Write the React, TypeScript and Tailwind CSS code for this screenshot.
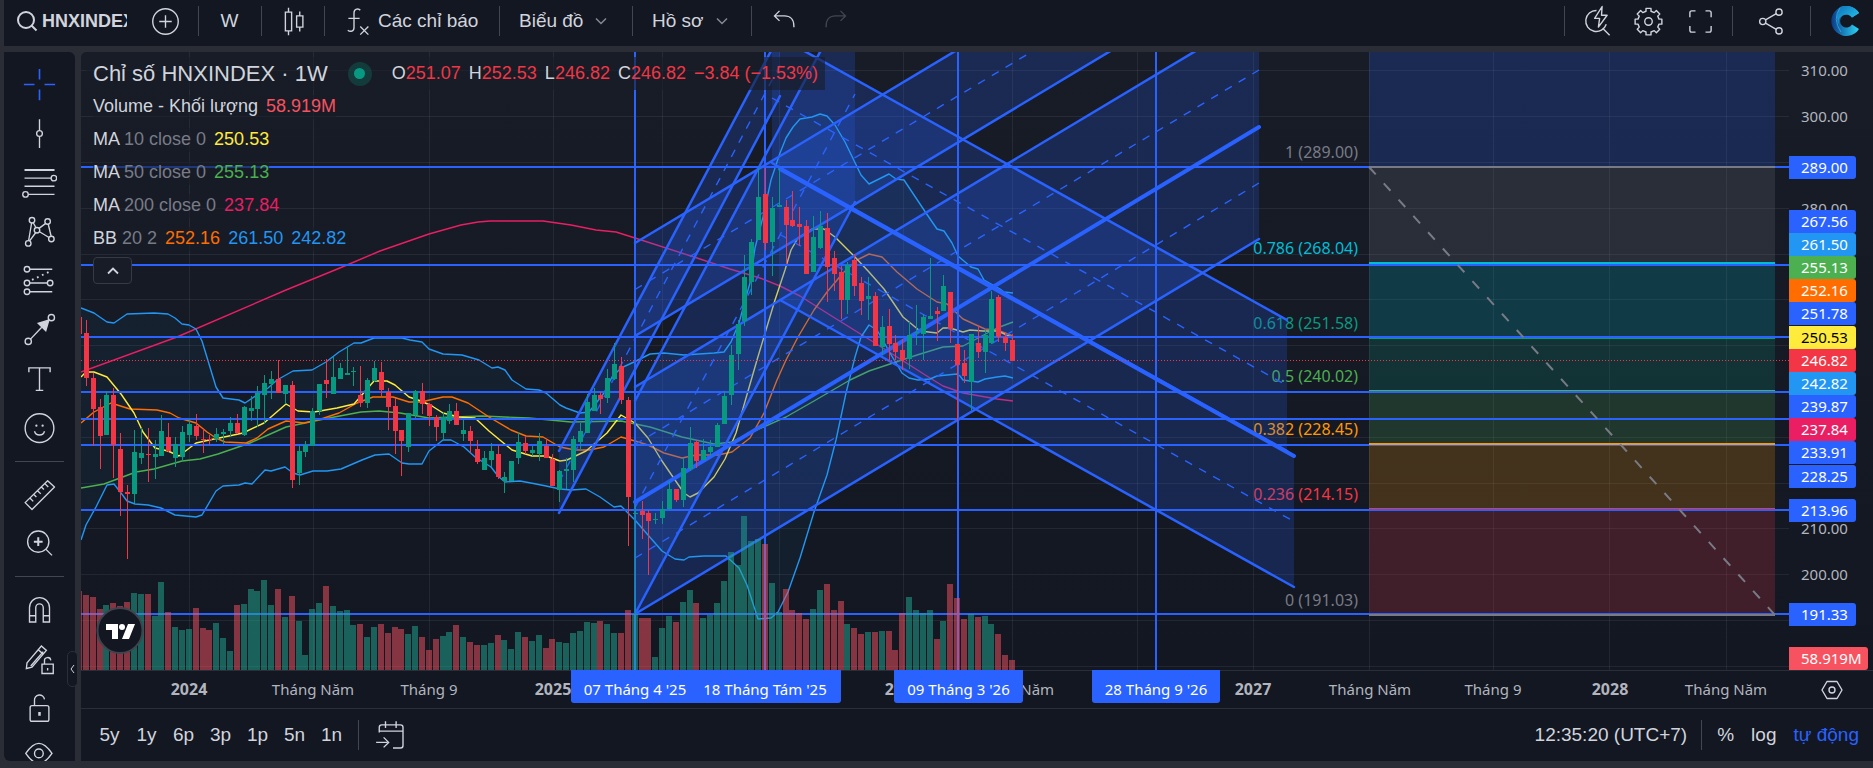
import type { ReactNode } from "react";

const BLUE = "#2962ff";
const UP = "#089981";
const DOWN = "#f23645";

// direction, body top, body bottom, wick top, wick bottom, volume height
type Bar = ["u" | "d", number, number, number, number, number];

const bars: Bar[] = [
  ["d", 333, 378, 320, 386, 75], ["d", 378, 409, 373, 446, 73], ["d", 407, 436, 399, 469, 61], ["u", 395, 435, 391, 435, 65],
  ["d", 395, 445, 388, 478, 67], ["d", 449, 492, 433, 516, 64], ["d", 492, 494, 485, 559, 68], ["u", 452, 494, 430, 503, 77],
  ["u", 453, 458, 428, 464, 76], ["d", 454, 455, 428, 482, 76], ["u", 454, 457, 440, 479, 54], ["u", 431, 456, 415, 456, 88],
  ["d", 437, 451, 423, 452, 58], ["u", 444, 458, 437, 467, 43], ["u", 432, 457, 426, 461, 40], ["u", 424, 435, 419, 442, 41],
  ["d", 426, 436, 414, 440, 62], ["d", 439, 440, 428, 453, 42], ["d", 439, 440, 435, 445, 40], ["u", 434, 439, 428, 442, 47],
  ["u", 432, 434, 429, 444, 32], ["u", 423, 431, 417, 437, 19], ["d", 423, 433, 414, 434, 65], ["u", 407, 435, 406, 436, 66],
  ["u", 408, 411, 396, 421, 81], ["u", 393, 409, 386, 427, 79], ["u", 383, 395, 375, 424, 90], ["u", 379, 384, 371, 399, 65],
  ["d", 379, 393, 360, 393, 81], ["u", 385, 394, 385, 404, 53], ["d", 385, 480, 381, 488, 74], ["u", 451, 473, 446, 485, 49],
  ["u", 445, 452, 441, 457, 15], ["u", 411, 446, 408, 446, 61], ["u", 384, 411, 384, 415, 67], ["d", 380, 384, 359, 398, 84],
  ["u", 377, 394, 357, 394, 64], ["u", 368, 379, 363, 379, 59], ["u", 373, 375, 347, 375, 60], ["u", 371, 372, 367, 386, 45],
  ["d", 395, 403, 366, 407, 46], ["u", 380, 403, 378, 408, 33], ["u", 368, 381, 361, 382, 43], ["d", 372, 390, 362, 396, 46],
  ["d", 392, 407, 388, 430, 37], ["d", 406, 431, 398, 454, 43], ["d", 430, 441, 430, 476, 41], ["u", 413, 447, 413, 452, 36],
  ["u", 391, 415, 390, 418, 44], ["d", 391, 404, 383, 414, 33], ["d", 404, 416, 403, 426, 20], ["d", 417, 427, 415, 441, 31],
  ["u", 417, 433, 412, 440, 34], ["u", 411, 421, 404, 424, 38], ["d", 411, 425, 403, 425, 45], ["u", 430, 434, 420, 441, 33],
  ["d", 431, 441, 426, 453, 28], ["d", 449, 462, 440, 464, 25], ["u", 458, 470, 451, 470, 25], ["u", 451, 460, 443, 467, 27],
  ["d", 454, 477, 445, 479, 35], ["u", 477, 481, 472, 493, 30], ["u", 461, 481, 461, 481, 21], ["u", 442, 458, 432, 464, 38],
  ["d", 443, 451, 436, 454, 33], ["u", 450, 453, 446, 456, 29], ["u", 441, 454, 433, 461, 35], ["d", 446, 458, 439, 458, 22],
  ["d", 459, 486, 454, 486, 31], ["u", 471, 490, 470, 502, 28], ["u", 469, 471, 458, 489, 27], ["u", 439, 470, 436, 482, 37],
  ["u", 431, 442, 423, 450, 39], ["u", 402, 433, 394, 433, 48], ["u", 395, 411, 388, 411, 47], ["d", 395, 399, 392, 414, 49],
  ["u", 378, 398, 369, 403, 46], ["u", 364, 379, 343, 380, 37], ["d", 366, 400, 357, 404, 37], ["d", 400, 497, 397, 546, 60],
  ["u", 513, 514, 505, 614, 56], ["d", 511, 515, 501, 539, 52], ["d", 513, 521, 510, 575, 52], ["u", 519, 520, 513, 524, 13],
  ["u", 509, 518, 501, 524, 42], ["u", 489, 509, 481, 510, 54], ["d", 489, 500, 489, 502, 48], ["u", 468, 500, 458, 507, 68],
  ["u", 443, 469, 427, 471, 80], ["d", 442, 461, 440, 468, 67], ["u", 450, 460, 439, 460, 52], ["u", 447, 452, 440, 456, 55],
  ["u", 425, 447, 423, 447, 67], ["u", 396, 424, 391, 424, 89], ["u", 355, 395, 345, 405, 118], ["u", 324, 354, 320, 370, 105],
  ["u", 277, 321, 255, 326, 154], ["u", 242, 282, 239, 295, 129], ["u", 197, 240, 167, 240, 131], ["d", 194, 243, 168, 250, 126],
  ["u", 208, 242, 197, 276, 87], ["u", 205, 207, 168, 207, 58], ["d", 207, 225, 200, 264, 81], ["d", 220, 226, 191, 227, 60],
  ["d", 224, 227, 207, 246, 57], ["d", 226, 274, 220, 274, 51], ["u", 237, 272, 216, 272, 61], ["u", 226, 248, 211, 249, 80],
  ["d", 228, 267, 213, 302, 86], ["d", 258, 274, 251, 291, 60], ["d", 272, 300, 266, 319, 69], ["u", 265, 300, 262, 314, 46],
  ["d", 260, 286, 254, 296, 42], ["d", 283, 301, 277, 315, 36], ["u", 296, 299, 277, 320, 38], ["d", 296, 346, 292, 346, 38],
  ["u", 327, 347, 316, 355, 39], ["d", 326, 344, 309, 360, 39], ["d", 343, 352, 335, 360, 20], ["d", 350, 360, 339, 370, 57],
  ["u", 335, 359, 322, 369, 73], ["u", 332, 333, 305, 345, 60], ["u", 317, 334, 314, 360, 57], ["u", 316, 319, 258, 319, 60],
  ["d", 311, 314, 307, 341, 31], ["u", 286, 311, 275, 311, 49], ["d", 292, 329, 292, 343, 86], ["d", 344, 365, 344, 421, 72],
  ["d", 363, 376, 350, 383, 51], ["u", 334, 382, 334, 410, 56], ["d", 343, 352, 325, 358, 53], ["u", 335, 352, 330, 373, 54],
  ["u", 299, 343, 291, 344, 46], ["d", 297, 337, 295, 342, 36], ["d", 337, 343, 332, 351, 15], ["d", 340, 361, 334, 361, 10],
];

const barX = (i: number) => Math.floor(86.4 + 6.86 * i);

const ma200 =
  "81,372 177,337 286,290 335,270 347,265 380,251 429,234 461,225 478,222 490,221 543,221 571,225 596,230 616,232 635,238 694,257 730,269 760,278 780,286 800,296 830,315 867,338 897,357 930,378 943,386 963,393 997,399 1013,401";
const ma50 =
  "81,488 104,484 136,472 154,469 182,461 200,459 218,454 250,443 268,435 286,427 329,418 361,412 379,411 400,413 429,418 482,416 529,418 571,422 621,421 650,427 682,437 714,444 732,442 750,433 786,417 814,401 850,380 869,371 890,364 917,355 943,347 963,346 980,337 997,328 1013,322";
const ma10 =
  "81,377 86,372 94,372 107,377 121,394 134,413 143,432 155,448 168,451 179,456 196,443 214,439 229,436 243,433 264,423 286,404 298,411 314,412 337,408 354,404 374,381 387,381 395,385 409,397 421,401 432,406 443,413 459,417 475,418 489,431 512,450 532,456 546,456 560,461 567,460 586,451 607,433 621,415 635,423 648,438 662,461 675,480 684,493 690,497 698,493 714,477 725,459 736,433 746,398 757,360 766,330 775,300 785,270 791,250 798,238 812,229 824,229 835,237 855,257 869,272 884,289 903,317 920,331 937,333 943,328 950,328 963,332 970,330 983,331 998,331 1013,338";
const bbMid =
  "81,423 94,412 111,403 130,409 157,410 170,413 179,418 196,423 207,432 216,438 225,442 246,443 257,438 268,429 286,421 304,423 321,419 339,413 357,403 373,397 393,397 409,402 421,402 443,397 452,397 468,403 489,417 511,430 526,436 543,437 560,447 575,450 589,450 604,447 621,437 635,441 648,445 664,453 682,458 696,455 718,455 732,452 750,438 764,413 777,380 786,360 798,337 814,310 827,292 843,273 857,260 869,254 882,257 897,272 917,289 937,302 947,304 963,319 985,329 997,330 1013,336";
const bbUpper =
  "81,308 94,313 107,322 114,323 127,314 154,313 168,314 175,318 182,324 189,325 196,329 202,341 216,387 223,398 239,400 245,403 257,395 268,388 277,380 293,371 312,370 326,362 339,352 354,343 361,343 374,338 402,338 410,340 422,342 429,349 443,354 462,355 479,360 492,368 498,367 505,370 512,380 526,389 539,390 546,393 560,405 566,408 580,413 589,412 604,393 612,377 621,368 634,362 650,354 664,353 684,355 714,353 724,352 731,342 739,323 746,297 750,283 755,248 763,217 771,180 780,153 786,138 793,127 800,119 812,117 820,114 827,116 835,125 845,142 861,175 869,184 889,174 896,179 904,180 916,198 926,213 937,229 944,231 952,243 958,256 971,267 978,269 984,280 1000,289 1004,292 1013,293";
const bbLower =
  "81,540 86,525 96,507 107,485 114,484 121,493 127,501 135,504 148,505 161,508 175,515 196,517 202,515 216,491 223,486 239,485 245,483 252,484 265,470 271,471 285,467 293,473 300,475 313,471 327,471 341,469 362,460 375,455 389,454 402,463 409,464 422,464 429,451 443,440 451,440 464,447 475,457 491,467 498,476 505,482 520,481 536,484 546,486 560,489 571,490 586,489 600,497 614,507 621,506 635,520 648,535 662,551 675,559 684,560 689,557 704,556 726,556 739,568 747,585 758,619 771,618 778,612 788,592 800,558 814,512 827,475 836,440 846,393 855,357 861,337 869,325 877,330 890,353 902,373 909,378 918,380 930,379 937,376 957,374 960,376 963,380 978,382 985,379 997,377 1005,376 1013,378";

const bbArea = bbUpper + " " + bbLower.split(" ").reverse().join(" ");

// parallel channels: x range, top edge start/end, bottom edge start/end, edge widths
const channels = [
  { x1: 559, x2: 780, a1: 451, a2: 34, b1: 513, b2: 96, wa: 2.5, wb: 2.5 },
  { x1: 635, x2: 855, a1: 401, a2: -14, b1: 614, b2: 202, wa: 2.5, wb: 2.5 },
  { x1: 635, x2: 1259, a1: 243, a2: -131, b1: 336, b2: -38, wa: 2.5, wb: 2.5 },
  { x1: 635, x2: 1259, a1: 387, a2: 13, b1: 502, b2: 127, wa: 2.5, wb: 4 },
  { x1: 635, x2: 1259, a1: 502, a2: 127, b1: 614, b2: 239, wa: 2.5, wb: 2.5 },
  { x1: 772, x2: 1287, a1: 33, a2: 320, b1: 163, b2: 451, wa: 2.5, wb: 2.5 },
  { x1: 780, x2: 1294, a1: 169, a2: 456, b1: 300, b2: 587, wa: 4, wb: 2.5 },
];

const hLines = [167, 265, 337, 392, 419, 445, 510, 614];
const vLines = [635, 765, 958, 1156];

const fibs = [
  { top: 52, h: 115, fill: "#2962ff" },
  { top: 167, h: 96, fill: "#787b86" },
  { top: 263, h: 75, fill: "#00bcd4" },
  { top: 338, h: 53, fill: "#089981" },
  { top: 391, h: 53, fill: "#4caf50" },
  { top: 444, h: 65, fill: "#ff9800" },
  { top: 509, h: 106, fill: "#f23645" },
];

const fibLevels = [
  { y: 167, label: "1 (289.00)", color: "#787b86" },
  { y: 263, label: "0.786 (268.04)", color: "#00bcd4" },
  { y: 338, label: "0.618 (251.58)", color: "#089981" },
  { y: 391, label: "0.5 (240.02)", color: "#4caf50" },
  { y: 444, label: "0.382 (228.45)", color: "#ff9800" },
  { y: 509, label: "0.236 (214.15)", color: "#f23645" },
  { y: 615, label: "0 (191.03)", color: "#787b86" },
];

const gridY = [70, 116, 162, 208, 254, 299, 345, 391, 437, 483, 528, 574, 620, 666];
const gridX = [189, 313, 429, 553, 662, 779, 903, 1012, 1137, 1253, 1369, 1493, 1609, 1726];

const priceLabels = [
  { y: 70, text: "310.00" },
  { y: 116, text: "300.00" },
  { y: 208, text: "280.00" },
  { y: 528, text: "210.00" },
  { y: 574, text: "200.00" },
];

const priceTags = [
  { y: 156, text: "289.00", bg: BLUE },
  { y: 210, text: "267.56", bg: BLUE },
  { y: 233, text: "261.50", bg: "#2196f3" },
  { y: 256, text: "255.13", bg: "#4caf50" },
  { y: 279, text: "252.16", bg: "#ff6d00" },
  { y: 302, text: "251.78", bg: BLUE },
  { y: 326, text: "250.53", bg: "#ffeb3b", fg: "#000" },
  { y: 349, text: "246.82", bg: DOWN },
  { y: 372, text: "242.82", bg: "#2196f3" },
  { y: 395, text: "239.87", bg: BLUE },
  { y: 418, text: "237.84", bg: "#e91e63" },
  { y: 441, text: "233.91", bg: BLUE },
  { y: 465, text: "228.25", bg: BLUE },
  { y: 499, text: "213.96", bg: BLUE },
  { y: 603, text: "191.33", bg: BLUE },
  { y: 647, text: "58.919M", bg: "#f7525f", w: 79 },
];

const timeLabels = [
  { x: 189, text: "2024", bold: true },
  { x: 313, text: "Tháng Năm" },
  { x: 429, text: "Tháng 9" },
  { x: 553, text: "2025", bold: true },
  { x: 903, text: "2026", bold: true },
  { x: 1013, text: "Tháng Năm" },
  { x: 1253, text: "2027", bold: true },
  { x: 1370, text: "Tháng Năm" },
  { x: 1493, text: "Tháng 9" },
  { x: 1610, text: "2028", bold: true },
  { x: 1726, text: "Tháng Năm" },
];

const timeTags = [
  { x: 571, w: 128, text: "07 Tháng 4 '25" },
  { x: 689, w: 152, text: "18 Tháng Tám '25" },
  { x: 894, w: 129, text: "09 Tháng 3 '26" },
  { x: 1092, w: 128, text: "28 Tháng 9 '26" },
];

function Chart() {
  return (
    <svg
      viewBox="81 52 1792 656"
      preserveAspectRatio="xMinYMin meet"
      className="block h-full w-full font-['Noto_Sans',sans-serif] text-[15px]"
      role="img"
      aria-label="HNXINDEX 1W"
    >
      <defs>
        <linearGradient id="bg" x1="0" y1="0" x2="0" y2="1">
          <stop offset="0" stopColor="#181c27" />
          <stop offset="1" stopColor="#131722" />
        </linearGradient>
        <clipPath id="pane">
          <rect x="81" y="52" width="1708" height="618" />
        </clipPath>
      </defs>
      <rect x="81" y="52" width="1792" height="618" fill="url(#bg)" />

      <g clipPath="url(#pane)" fill="none">
        <g fill="#f2f2f2" fillOpacity="0.07" shapeRendering="crispEdges">
          {gridY.map((y) => <rect key={y} x="81" y={y} width="1708" height="1" />)}
          {gridX.map((x) => <rect key={x} x={x} y="52" width="1" height="618" />)}
        </g>

        {fibs.map((f) => (
          <rect key={f.top} x="1369" y={f.top} width="406" height={f.h} fill={f.fill} fillOpacity="0.2" />
        ))}

        <polygon points={bbArea} fill="#2196f3" fillOpacity="0.06" />
        <g strokeWidth="1.4" strokeLinejoin="round">
          <polyline points={ma200} stroke="#e91e63" />
          <polyline points={ma50} stroke="#4caf50" />
          <polyline points={bbMid} stroke="#ff6d00" />
          <polyline points={ma10} stroke="#ffeb3b" />
        </g>

        {fibLevels.map((f) => (
          <text key={f.label} x="1358" y={f.y - 9} textAnchor="end" fontSize="16" fill={f.color}>
            {f.label}
          </text>
        ))}

        {channels.map((c, i) => (
          <polygon
            key={i}
            points={`${c.x1},${c.a1} ${c.x2},${c.a2} ${c.x2},${c.b2} ${c.x1},${c.b1}`}
            fill={BLUE}
            fillOpacity="0.2"
          />
        ))}
        <g stroke="#2196f3" strokeWidth="1.4" strokeLinejoin="round">
          <polyline points={bbUpper} />
          <polyline points={bbLower} />
        </g>
        {channels.map((c, i) => (
          <g key={i} stroke={BLUE} strokeLinecap="round">
            <line x1={c.x1} y1={c.a1} x2={c.x2} y2={c.a2} strokeWidth={c.wa} />
            <line x1={c.x1} y1={c.b1} x2={c.x2} y2={c.b2} strokeWidth={c.wb} />
            <line
              x1={c.x1}
              y1={(c.a1 + c.b1) / 2}
              x2={c.x2}
              y2={(c.a2 + c.b2) / 2}
              strokeWidth="1.4"
              strokeLinecap="butt"
              strokeDasharray="8 8"
            />
          </g>
        ))}

        <g fill={BLUE} shapeRendering="crispEdges">
          {hLines.map((y) => <rect key={y} x="81" y={y - 1} width="1708" height="2" />)}
          {vLines.map((x) => <rect key={x} x={x - 1} y="52" width="2" height="618" />)}
        </g>

        <g shapeRendering="crispEdges">
          <rect x="1369" y="166" width="406" height="2" fill="#787b86" />
          <rect x="1369" y="262" width="406" height="2" fill="#00bcd4" />
          <rect x="1369" y="338" width="406" height="1" fill="#089981" />
          <rect x="1369" y="390" width="406" height="1" fill="#4caf50" />
          <rect x="1369" y="443" width="406" height="2" fill="#ff9800" />
          <rect x="1369" y="508" width="406" height="1" fill="#f23645" />
          <rect x="1369" y="614" width="406" height="2" fill="#787b86" />
        </g>
        <line x1="1369" y1="167" x2="1775" y2="615" stroke="#787b86" strokeWidth="2" strokeDasharray="10 12" />

        <g shapeRendering="crispEdges">
          <rect x="81" y="591" width="1" height="79" fill="#f7525f" fillOpacity="0.5" />
          {bars.map(([dir, , , , , vol], i) => (
            <rect
              key={i}
              x={barX(i) - 3}
              y={670 - vol}
              width="6"
              height={vol}
              fill={dir === "u" ? "#22ab94" : "#f7525f"}
              fillOpacity="0.5"
            />
          ))}
          <rect x="81" y="317" width="1" height="17" fill={DOWN} />
          {bars.map(([dir, top, bottom, high, low], i) => (
            <g key={i} fill={dir === "u" ? UP : DOWN}>
              <rect x={barX(i)} y={high} width="1" height={low - high} />
              <rect x={barX(i) - 2} y={top} width="5" height={bottom - top} />
            </g>
          ))}
        </g>
        <line x1="81" y1="360.5" x2="1789" y2="360.5" stroke={DOWN} strokeDasharray="1 2" />
      </g>

      <g fill="#b2b5be">
        {priceLabels.map((l) => (
          <text key={l.text} x="1801" y={l.y + 6}>{l.text}</text>
        ))}
      </g>
      {priceTags.map((t) => (
        <g key={t.text}>
          <path
            d={`M1789 ${t.y}h${(t.w ?? 67) - 3}q3 0 3 3v17q0 3 -3 3h-${(t.w ?? 67) - 3}z`}
            fill={t.bg}
          />
          <text x="1801" y={t.y + 17} fill={t.fg ?? "#fff"}>{t.text}</text>
        </g>
      ))}

      <rect x="81" y="670" width="1792" height="38" fill="#131722" />
      <rect x="81" y="670" width="1792" height="1" fill="#2a2e39" />
      <g fill="#b2b5be" textAnchor="middle">
        {timeLabels.map((l) => (
          <text key={l.x} x={l.x} y="695" fontWeight={l.bold ? 700 : 400} fontSize={l.bold ? 16 : 15}>
            {l.text}
          </text>
        ))}
      </g>
      {timeTags.map((t) => (
        <path key={t.x} d={`M${t.x} 670h${t.w}v30q0 3 -3 3h-${t.w - 6}q-3 0 -3 -3z`} fill={BLUE} />
      ))}
      {timeTags.map((t) => (
        <text key={t.x} x={t.x + t.w / 2} y="695" textAnchor="middle" fill="#fff">{t.text}</text>
      ))}
      <g fill="none" stroke="#d1d4dc" strokeWidth="1.4">
        <path d="M1827 681.500h10l5 8.500l-5 8.500h-10l-5 -8.500z" strokeLinejoin="round" />
        <circle cx="1832" cy="690" r="3" />
      </g>

      <circle cx="120" cy="630.500" r="22.500" fill="#131722" stroke="#3f434e" strokeWidth="2" />
      <g fill="#fff">
        <path d="M106 624h12v15h-6v-9h-6z" />
        <circle cx="122" cy="627" r="3" />
        <path d="M128 624h7l-6 15h-7z" />
      </g>
    </svg>
  );
}

function Icon({ size = 35, children }: { size?: number; children: ReactNode }) {
  return (
    <svg
      width={size}
      height={size}
      viewBox="0 0 28 28"
      fill="none"
      stroke="currentColor"
      strokeWidth="1.1"
      className="shrink-0"
      aria-hidden="true"
    >
      {children}
    </svg>
  );
}

function Divider() {
  return <span className="h-[30px] w-px shrink-0 bg-[#434651]" />;
}

function Chevron() {
  return (
    <svg width="12" height="8" viewBox="0 0 12 8" fill="none" stroke="#868993" strokeWidth="1.5" aria-hidden="true">
      <path d="M1 1.500l5 5l5 -5" />
    </svg>
  );
}

function Header() {
  return (
    <header className="flex h-[46px] shrink-0 items-center bg-[#131722] pb-1 text-[19px]">
      <button aria-label="HNXINDEX" className="flex w-[139px] items-center gap-1 pl-[13px]">
        <svg width="21" height="21" viewBox="0 0 21 21" fill="none" stroke="currentColor" strokeWidth="2" aria-hidden="true">
          <circle cx="9" cy="9" r="8" />
          <path d="M14.500 14.500l5 5" />
        </svg>
        <span className="w-[85px] overflow-hidden whitespace-nowrap text-left text-[18px] font-bold">HNXINDEX</span>
      </button>
      <button aria-label="So sánh" className="flex w-[45px] justify-center">
        <Icon>
          <circle cx="14" cy="14" r="10.200" />
          <path d="M14 9v10M9 14h10" />
        </Icon>
      </button>
      <span className="w-[10px]" />
      <Divider />
      <button className="w-[62px] pr-px">W</button>
      <Divider />
      <button aria-label="Nến" className="flex w-[62px] justify-center">
        <Icon>
          <path d="M7.500 6.500h5v15h-5zM10 3v3.500M10 21.500v3.500M16.500 9.500h5v9h-5zM19 6v3.500M19 18.500v3.500" />
        </Icon>
      </button>
      <Divider />
      <button className="flex w-[174px] items-center gap-1 pl-[14px]">
        <Icon>
          <path d="M17 5c-1-1.500-5-1.600-5 2v12c0 3-3 3.500-5 2M7.500 11.500h9" />
          <path d="M17 18l6.500 6.500M23.500 18l-6.500 6.500" />
        </Icon>
        Các chỉ báo
      </button>
      <Divider />
      <button className="flex w-[132px] items-center gap-3 pl-[19px]">
        Biểu đồ <Chevron />
      </button>
      <Divider />
      <button className="flex w-[118px] items-center gap-3 pl-[19px]">
        Hồ sơ <Chevron />
      </button>
      <Divider />
      <button aria-label="Hoàn tác" className="ml-[7px] flex w-[51px] justify-center">
        <Icon>
          <path d="M10 5.500l-4 4l4 4M6 9.500h8c4.500 0 7.500 3 7.500 8v1" />
        </Icon>
      </button>
      <button aria-label="Làm lại" disabled className="flex w-[51px] justify-center text-[#434651]">
        <Icon>
          <path d="M18 5.500l4 4l-4 4M22 9.500h-8c-4.500 0-7.500 3-7.500 8v1" />
        </Icon>
      </button>

      <div className="ml-auto flex items-center pr-[14px]">
        <Divider />
        <button aria-label="Tìm kiếm nhanh" className="ml-[5px] flex w-[52px] justify-center">
          <Icon>
            <path d="M14 5.200a8.400 8.400 0 1 0 7.800 11M19.500 20l5 5" />
            <path d="M18.500 2l-6 9.500h4l-1 7l7-9.500h-4.500z" strokeLinejoin="round" />
          </Icon>
        </button>
        <button aria-label="Cài đặt" className="flex w-[52px] justify-center">
          <Icon>
            <circle cx="14" cy="14" r="3" />
            <path
              strokeLinejoin="round"
              d="M12 3.500h4v2.300l2.600 1.100l1.700-1.700l2.700 2.800l-1.600 1.700l1 2.400h2.300v4h-2.300l-1 2.400l1.600 1.700l-2.700 2.800l-1.700-1.700l-2.600 1.100v2.300h-4v-2.300l-2.600-1.100l-1.700 1.700l-2.700-2.800l1.600-1.700l-1-2.400h-2.300v-4h2.300l1-2.400l-1.600-1.700l2.700-2.800l1.700 1.700l2.600-1.100z"
            />
          </Icon>
        </button>
        <button aria-label="Toàn màn hình" className="flex w-[52px] justify-center">
          <Icon>
            <path d="M5.500 10.500v-3.500q0-1.500 1.500-1.500h3M18 5.500h3q1.500 0 1.500 1.500v3.500M22.500 17.500v3.500q0 1.500-1.500 1.500h-3M10 22.500h-3q-1.500 0-1.500-1.500v-3.500" />
          </Icon>
        </button>
        <span className="w-[6px]" />
        <Divider />
        <button aria-label="Chia sẻ" className="flex w-[77px] justify-center">
          <Icon>
            <circle cx="7" cy="14" r="2.500" />
            <circle cx="20" cy="6.500" r="2.500" />
            <circle cx="20" cy="21.500" r="2.500" />
            <path d="M9.200 12.700l8.600-5M9.200 15.300l8.600 5" />
          </Icon>
        </button>
        <Divider />
        <a href="#" aria-label="Trang chủ" className="ml-5">
          <svg width="28" height="30" viewBox="0 0 28 30" aria-hidden="true">
            <defs>
              <linearGradient id="logoA" x1="0" y1="0" x2="1" y2="1">
                <stop offset="0" stopColor="#0d6fb8" />
                <stop offset="1" stopColor="#2ad4f5" />
              </linearGradient>
              <linearGradient id="logoB" x1="0" y1="0" x2="1" y2="0">
                <stop offset="0" stopColor="#0b3a86" />
                <stop offset="1" stopColor="#2bd6f7" />
              </linearGradient>
            </defs>
            <path d="M28 7A15 15 0 1 0 28 23L21 18.500A6.500 6.500 0 1 1 21 11.500z" fill="url(#logoB)" />
            <path d="M28 7A15 15 0 0 0 9 1A16 16 0 0 0 9 20A7 7 0 0 1 21 11.500z" fill="url(#logoA)" />
            <path d="M9 2Q1 13 10 26" fill="none" stroke="#3aa8e0" strokeWidth="0.800" />
          </svg>
        </a>
      </div>
    </header>
  );
}

const tools: { name: string; icon: ReactNode }[] = [
  { name: "Con trỏ", icon: <path stroke={BLUE} strokeWidth="1.300" d="M14 1.500v8.500M14 18v8.500M1.500 14h8.500M18 14h8.500" /> },
  { name: "Đường xu hướng", icon: <><circle cx="14" cy="14" r="2.300" /><path d="M14 2.500v9.200M14 16.300v9.200" /></> },
  {
    name: "Fibonacci",
    icon: (
      <>
        <path strokeWidth="1.600" d="M2 4h24" />
        <path d="M2 10.500h21.500M2 17h24M5 23.500h21" />
        <circle cx="25.500" cy="10.500" r="2.200" />
        <circle cx="2.800" cy="23.500" r="2.200" />
      </>
    ),
  },
  {
    name: "Mẫu hình",
    icon: (
      <>
        <circle cx="8" cy="5" r="2.200" />
        <circle cx="20.500" cy="6" r="2.200" />
        <circle cx="12" cy="13" r="2.200" />
        <circle cx="5" cy="23.500" r="2.200" />
        <circle cx="23.500" cy="20" r="2.200" />
        <path d="M7.700 7.200l-2.400 14M9 7l2.200 4M13.600 11.500l5.400-4M21 8.200l2.300 9.600M10.900 15l-4.800 6.500M14 14.200l7.600 4.600" />
      </>
    ),
  },
  {
    name: "Dự báo",
    icon: (
      <>
        <circle cx="4" cy="5" r="2.200" />
        <circle cx="4" cy="16" r="2.200" />
        <circle cx="22.500" cy="16" r="2.200" />
        <circle cx="4" cy="23" r="2.200" />
        <path d="M6.200 5h18M6.200 16h14M6.200 23h18" />
        <path d="M8 13.500l15-7" strokeDasharray="1.400 3" strokeWidth="1.500" />
      </>
    ),
  },
  {
    name: "Mũi tên",
    icon: (
      <>
        <circle cx="5" cy="23.500" r="2.500" />
        <circle cx="23.500" cy="4.500" r="2.500" />
        <path d="M6.800 21.700l9-9.500" />
        <path d="M21.500 6.500l-2.500 8.500l-6-6z" fill="currentColor" />
      </>
    ),
  },
  { name: "Chữ", icon: <path d="M5.500 9v-3.500h17v3.500M14 5.500v18M11 23.500h6" /> },
  {
    name: "Biểu tượng",
    icon: (
      <>
        <circle cx="14" cy="14.500" r="11.500" />
        <path d="M10 17c1 4 7 4 8 0" />
        <circle cx="11.500" cy="12.500" r="0.900" fill="currentColor" stroke="none" />
        <circle cx="16.500" cy="12.500" r="0.900" fill="currentColor" stroke="none" />
      </>
    ),
  },
];

const measureTools: { name: string; icon: ReactNode }[] = [
  {
    name: "Thước đo",
    icon: <path strokeLinejoin="round" d="M2.500 20.500l18-17.500l5.500 5l-18 18zM6.500 17l2.500 2.500M9.500 14l2 2M12.500 11l2.500 2.500M15.500 8l2 2M18.500 5.500l2.500 2.500" />,
  },
  { name: "Phóng to", icon: <><circle cx="13" cy="12.500" r="8.500" /><path d="M13 9v7M9.500 12.500h7" strokeWidth="1.600" /><path d="M19 18.500l5 5" /></> },
];

const stateTools: { name: string; icon: ReactNode }[] = [
  { name: "Nam châm", icon: <path d="M6 24v-11.500a8 8 0 0 1 16 0v11.500h-5v-11.500a3 3 0 0 0 -6 0v11.500zM6 19h5M17 19h5" /> },
  {
    name: "Chế độ vẽ",
    icon: (
      <>
        <path d="M4 17.500l11.500-13.500l4 3.500l-11.500 13.500l-4.500 1zM13 7l4 3.500M7 20l10-11.500" />
        <path d="M16 18.500h9v7.500h-9zM18 18.500v-2.500a2.500 2.500 0 0 1 5 -0.500M20.500 21.500v2" />
      </>
    ),
  },
  { name: "Khóa", icon: <><rect x="6.500" y="12.500" width="15" height="12.500" rx="1.500" /><path d="M10 12.500v-4a4 4 0 0 1 8 -1" /><path d="M14 17.500v3" strokeWidth="2" /></> },
  { name: "Ẩn", icon: <><path d="M2.500 11.500q5.500-8 10.500-8t10.500 8q-5.500 8-10.500 8t-10.500-8z" transform="translate(0.500)" /><circle cx="13.500" cy="11.500" r="3.500" /></> },
];

function ToolGroup({ items }: { items: { name: string; icon: ReactNode }[] }) {
  return (
    <>
      {items.map((t) => (
        <button key={t.name} aria-label={t.name} className="flex h-[49px] w-full shrink-0 items-center justify-center">
          <Icon>{t.icon}</Icon>
        </button>
      ))}
    </>
  );
}

function Sidebar() {
  return (
    <nav className="relative flex w-[71px] shrink-0 flex-col">
      <div className="flex min-h-0 flex-1 flex-col items-center overflow-hidden rounded-tr-md rounded-bl-md bg-[#131722] pt-2">
        <ToolGroup items={tools} />
        <span className="my-2 mt-[9px] h-px w-[49px] shrink-0 bg-[#434651]" />
        <ToolGroup items={measureTools} />
        <span className="my-2 h-px w-[49px] shrink-0 bg-[#434651]" />
        <ToolGroup items={stateTools} />
      </div>
      <button
        aria-label="Ẩn thanh công cụ"
        className="absolute -right-[3px] bottom-[74px] flex h-9 w-[11px] items-center justify-center rounded-[5px] border border-[#2a2e39] bg-[#131722]"
      >
        <svg width="5" height="10" viewBox="0 0 5 10" fill="none" stroke="currentColor" aria-hidden="true">
          <path d="M4 1l-3 4l3 4" />
        </svg>
      </button>
    </nav>
  );
}

const studies = [
  { name: "Volume - Khối lượng", args: "", values: [["58.919M", "text-[#f7525f]"]] },
  { name: "MA", args: "10 close 0", values: [["250.53", "text-[#ffeb3b]"]] },
  { name: "MA", args: "50 close 0", values: [["255.13", "text-[#4caf50]"]] },
  { name: "MA", args: "200 close 0", values: [["237.84", "text-[#e91e63]"]] },
  {
    name: "BB",
    args: "20 2",
    values: [["252.16", "text-[#ff6d00]"], ["261.50", "text-[#2196f3]"], ["242.82", "text-[#2196f3]"]],
  },
];

const ohlc = [["O", "251.07"], ["H", "252.53"], ["L", "246.82"], ["C", "246.82"]];

function Legend() {
  return (
    <div className="absolute top-[5px] left-[5px] flex flex-col items-start text-[18px] whitespace-nowrap text-[#d1d4dc]">
      <div className="flex h-[33px] items-center bg-[#181c27]/60 px-[7px]">
        <h1 className="text-[22px]">Chỉ số HNXINDEX · 1W</h1>
        <span className="mx-5 grid size-6 place-items-center rounded-full bg-[#089981]/25">
          <span className="size-[11px] rounded-full bg-[#089981]" />
        </span>
        <div className="flex gap-2">
          {ohlc.map(([k, v]) => (
            <span key={k}>
              {k}
              <span className="text-[#f23645]">{v}</span>
            </span>
          ))}
          <span className="text-[#f23645]">−3.84 (−1.53%)</span>
        </div>
      </div>
      {studies.map((s) => (
        <div key={s.name + s.args} className="flex h-[33px] items-center px-[7px]">
          <div className="flex h-6 items-center gap-2 bg-[#181c27]/60">
            <span>
              {s.name} {s.args && <span className="text-[#787b86]">{s.args}</span>}
            </span>
            {s.values.map(([v, color]) => (
              <span key={v} className={color}>{v}</span>
            ))}
          </div>
        </div>
      ))}
      <button
        aria-label="Thu gọn"
        className="ml-[7px] mt-[2px] flex h-[27px] w-[39px] items-center justify-center rounded border border-[#363a45] bg-[#181c27]"
      >
        <svg width="12" height="8" viewBox="0 0 12 8" fill="none" stroke="currentColor" strokeWidth="1.800" aria-hidden="true">
          <path d="M1 6.500l5 -5l5 5" />
        </svg>
      </button>
    </div>
  );
}

function Footer() {
  return (
    <footer className="flex h-[53px] shrink-0 items-center border-t border-[#2a2e39] bg-[#131722] pr-[14px] pl-[10px] text-[19px]">
      {["5y", "1y", "6p", "3p", "1p", "5n", "1n"].map((r) => (
        <button key={r} className="w-[37px]">{r}</button>
      ))}
      <span className="w-2" />
      <Divider />
      <button aria-label="Đi tới ngày" className="ml-[14px]">
        <Icon>
          <path d="M5 11.500v-4q0-2 2-2h15q2 0 2 2v14.500q0 2-2 2h-6M5 10.500h19M10 2.500v5.500M18.500 2.500v5.500M2.500 19.500h9M8.500 15.500l4 4l-4 4" />
        </Icon>
      </button>
      <button className="ml-auto">12:35:20 (UTC+7)</button>
      <span className="w-[14px]" />
      <Divider />
      <button className="ml-[15px]">%</button>
      <button className="ml-[17px]">log</button>
      <button className="ml-[17px] text-[#2962ff]">tự động</button>
    </footer>
  );
}

export default function App() {
  return (
    <div className="flex h-screen flex-col overflow-hidden bg-[#2a2d35] pb-[7px] pl-1 font-['Liberation_Sans',Arial,sans-serif] text-[#d1d4dc]">
      <Header />
      <div className="mt-[6px] flex min-h-0 flex-1 gap-[6px]">
        <Sidebar />
        <main className="flex min-w-0 flex-1 flex-col overflow-hidden rounded-tl-md bg-[#131722]">
          <div className="relative min-h-0 flex-1">
            <Chart />
            <Legend />
          </div>
          <Footer />
        </main>
      </div>
    </div>
  );
}
